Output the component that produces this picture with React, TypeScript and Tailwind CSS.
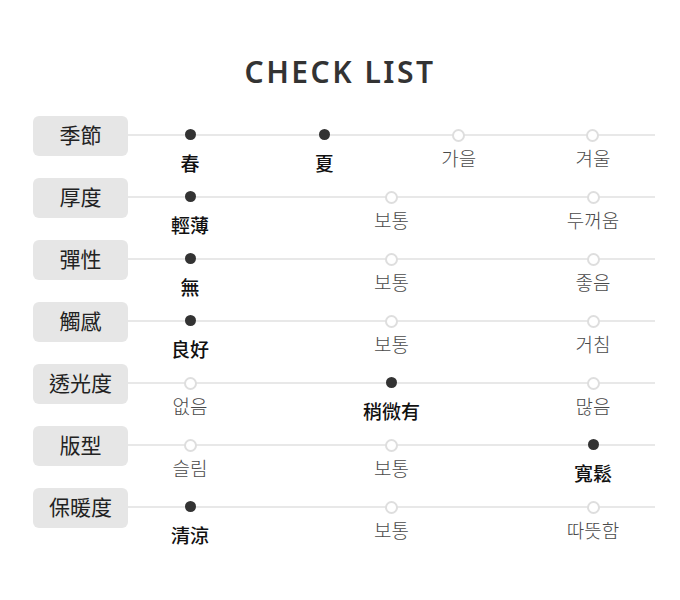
const FONT = "font-['Noto_Sans','Noto_Sans_CJK_TC','Noto_Sans_CJK_KR',sans-serif]";

type Row = { label: string; options: string[]; selected: number[] };

const rows: Row[] = [
  { label: "季節", options: ["春", "夏", "가을", "겨울"], selected: [0, 1] },
  { label: "厚度", options: ["輕薄", "보통", "두꺼움"], selected: [0] },
  { label: "彈性", options: ["無", "보통", "좋음"], selected: [0] },
  { label: "觸感", options: ["良好", "보통", "거침"], selected: [0] },
  { label: "透光度", options: ["없음", "稍微有", "많음"], selected: [1] },
  { label: "版型", options: ["슬림", "보통", "寬鬆"], selected: [2] },
  { label: "保暖度", options: ["清涼", "보통", "따뜻함"], selected: [0] },
];

function Option({ text, active }: { text: string; active: boolean }) {
  return (
    <div className="w-[80px] flex flex-col items-center">
      {active ? (
        <span className="mt-[13px] w-[11px] h-[11px] rounded-full bg-[#333333]" />
      ) : (
        <span className="mt-[13px] w-[13px] h-[13px] rounded-full bg-white border-2 border-[#dedede]" />
      )}
      {active ? (
        <span className="mt-[12px] text-[19px] leading-[24px] font-medium text-[#111]">{text}</span>
      ) : (
        <span className="mt-[5px] text-[19px] leading-[24px] font-light text-[#4a4a4a]">{text}</span>
      )}
    </div>
  );
}

function CheckRow({ row }: { row: Row }) {
  return (
    <div className="flex h-[62px]">
      <div className="w-[95px] h-[40px] rounded-[6px] bg-[#e6e6e6] flex items-center justify-center text-[21px] text-[#222]">
        {row.label}
      </div>
      <div className="relative flex-1">
        <div className="absolute left-0 right-0 top-[18px] h-[2px] bg-[#e8e8e8]" />
        <div className="relative flex justify-between px-[22px]">
          {row.options.map((o, i) => (
            <Option key={o + i} text={o} active={row.selected.includes(i)} />
          ))}
        </div>
      </div>
    </div>
  );
}

export default function App() {
  return (
    <div className={`w-[680px] h-[600px] bg-white ${FONT}`}>
      <h1 className="pt-[52px] text-center text-[30px] leading-[40px] font-semibold tracking-[2.5px] text-[#333]">
        CHECK LIST
      </h1>
      <div className="mt-[24px] pl-[33px] pr-[25px]">
        {rows.map((r) => (
          <CheckRow key={r.label} row={r} />
        ))}
      </div>
    </div>
  );
}
